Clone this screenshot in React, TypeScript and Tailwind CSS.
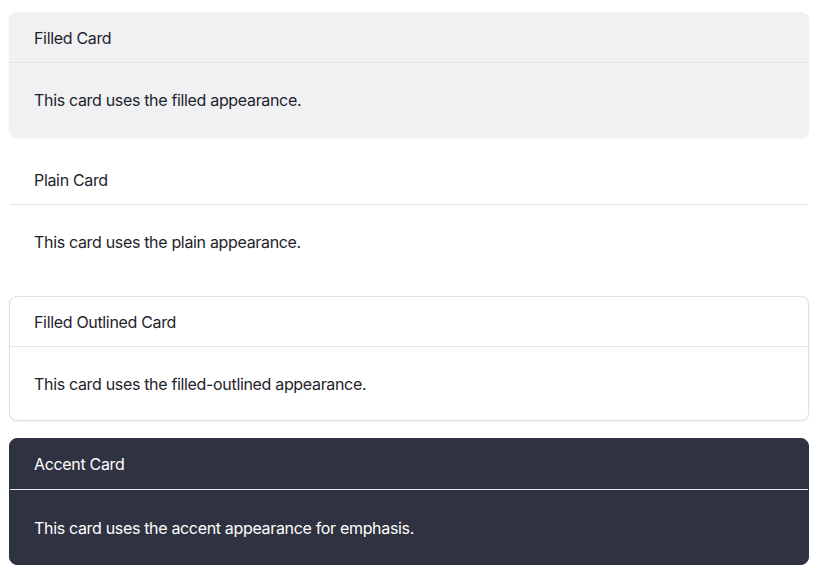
type Appearance = "filled" | "plain" | "filled-outlined" | "accent";

const cards: { title: string; appearance: Appearance; text: string }[] = [
  { title: "Filled Card", appearance: "filled", text: "This card uses the filled appearance." },
  { title: "Plain Card", appearance: "plain", text: "This card uses the plain appearance." },
  {
    title: "Filled Outlined Card",
    appearance: "filled-outlined",
    text: "This card uses the filled-outlined appearance.",
  },
  {
    title: "Accent Card",
    appearance: "accent",
    text: "This card uses the accent appearance for emphasis.",
  },
];

const cardStyles: Record<Appearance, { card: string; head: string; body: string }> = {
  filled: {
    card: "bg-[#f0f1f3] border-transparent rounded-lg shadow-[0_1px_2px_rgba(0,0,0,0.08)] text-[#1f232b]",
    head: "pt-[13px] pb-[12px] border-[#e0e2e6]",
    body: "pt-[25px] pb-6",
  },
  plain: {
    card: "bg-white border-transparent text-[#1f232b]",
    head: "pt-[13px] pb-[12px] border-[#e3e5e8]",
    body: "pt-[25px] pb-6",
  },
  "filled-outlined": {
    card: "bg-white border-[#dcdfe3] rounded-lg shadow-[0_1px_2px_rgba(0,0,0,0.06)] text-[#1f232b]",
    head: "pt-[13px] pb-[12px] border-[#e3e5e8]",
    body: "pt-[25px] pb-6",
  },
  accent: {
    card: "bg-[#2f3240] border-[#2f3240] rounded-lg text-white",
    head: "pt-[13px] pb-[13px] border-[#e8e9ec]",
    body: "pt-[26px] pb-6",
  },
};

function Card({ title, appearance, text }: { title: string; appearance: Appearance; text: string }) {
  const s = cardStyles[appearance];
  return (
    <div className={`w-[800px] border ${s.card}`}>
      <div className={`px-6 leading-6 border-b ${s.head}`}>{title}</div>
      <div className={`px-6 leading-6 ${s.body}`}>{text}</div>
    </div>
  );
}

export default function App() {
  return (
    <div
      className="min-h-[578px] bg-white pt-3 pl-[9px] flex flex-col gap-[17px] text-base tracking-[-0.33px]"
      style={{ fontFamily: "Inter, 'Liberation Sans', sans-serif" }}
    >
      {cards.map((c) => (
        <Card key={c.title} {...c} />
      ))}
    </div>
  );
}
